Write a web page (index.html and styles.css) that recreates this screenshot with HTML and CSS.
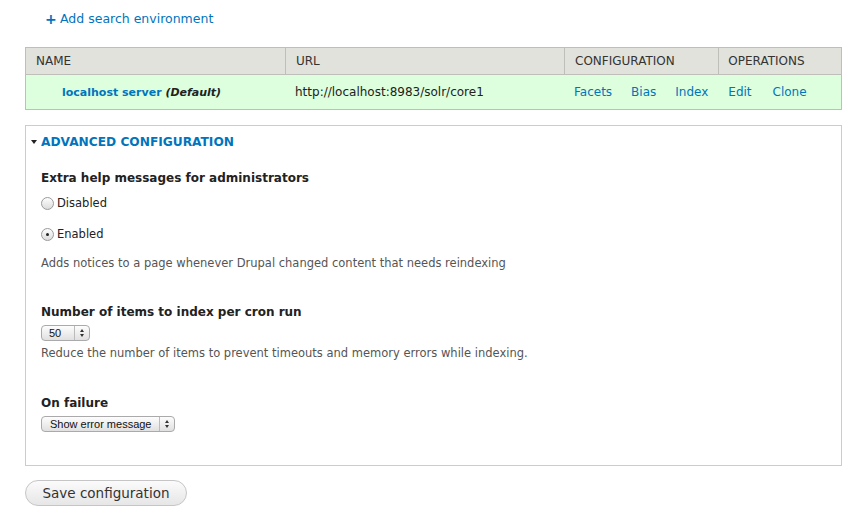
FILE: index.html
```html
<!DOCTYPE html>
<html>
<head>
<meta charset="utf-8">
<link rel="stylesheet" href="styles.css">
</head>
<body>
<div class="page">
  <ul class="action-links">
    <li><a href="#" class="add-link"><span class="plus">+</span>Add search environment</a></li>
  </ul>
  <table class="env-table">
    <thead>
      <tr>
        <th class="c-name">NAME</th>
        <th class="c-url">URL</th>
        <th class="c-conf">CONFIGURATION</th>
        <th class="c-ops">OPERATIONS</th>
      </tr>
    </thead>
    <tbody>
      <tr class="default-row">
        <td class="c-name"><a href="#" class="server">localhost server</a> <em class="default">(Default)</em></td>
        <td class="c-url">http://localhost:8983/solr/core1</td>
        <td class="c-conf"><a href="#" class="op">Facets</a><a href="#" class="op">Bias</a><a href="#" class="op">Index</a></td>
        <td class="c-ops"><a href="#" class="op">Edit</a><a href="#" class="op">Clone</a></td>
      </tr>
    </tbody>
  </table>

  <fieldset class="adv">
    <div class="legend"><span class="tri"></span>ADVANCED CONFIGURATION</div>
    <div class="fieldset-body">
      <div class="form-item">
        <div class="label">Extra help messages for administrators</div>
        <div class="radio-row"><span class="radio"></span>Disabled</div>
        <div class="radio-row"><span class="radio checked"></span>Enabled</div>
        <div class="desc desc-radios">Adds notices to a page whenever Drupal changed content that needs reindexing</div>
      </div>
      <div class="form-item item-cron">
        <div class="label">Number of items to index per cron run</div>
        <div class="select select-small"><span class="sel-val">50</span><span class="sel-arrows"></span></div>
        <div class="desc">Reduce the number of items to prevent timeouts and memory errors while indexing.</div>
      </div>
      <div class="form-item item-fail">
        <div class="label">On failure</div>
        <div class="select select-wide"><span class="sel-val">Show error message</span><span class="sel-arrows"></span></div>
      </div>
    </div>
  </fieldset>

  <div class="actions"><button class="btn">Save configuration</button></div>
</div>
</body>
</html>
```
FILE: styles.css
```css
html, body { margin: 0; padding: 0; background: #fff; }
body { font-family: "DejaVu Sans", "Liberation Sans", sans-serif; color: #333; font-size: 12px; }
a { color: #0074bd; text-decoration: none; }
.page { padding: 0 13px 0 25px; }

.action-links { list-style: none; margin: 0; padding: 11px 0 0 20px; height: 36px; box-sizing: border-box; }
.add-link { font-size: 12.5px; line-height: 16px; display: inline-flex; align-items: center; }
.plus { font-weight: bold; font-size: 14px; margin-right: 6px; width: 9px; display: inline-block; text-align: center; }

.env-table { width: 817px; border-collapse: collapse; margin-top: 11px; }
.env-table th, .env-table td { border: 1px solid #bebfb9; text-align: left; padding: 0 10px; }
.env-table th { background: #e1e2dc; font-weight: normal; font-size: 12px; height: 26px; color: #333; }
.env-table td { background: #ddffdd; height: 34px; font-size: 12px; color: #222; }
.env-table tbody td { border-left-color: #ddffdd; border-right-color: #ddffdd; }
.env-table tbody td:first-child { border-left-color: #bebfb9; }
.env-table tbody td:last-child { border-right-color: #bebfb9; }
.c-name { width: 239px; }
.c-url { width: 258px; }
.c-conf { width: 133px; }
.env-table th.c-ops { padding-left: 9px; }
.env-table td.c-name { padding-left: 36px; width: 213px; }
.env-table td.c-url { padding-left: 9px; }
.env-table td.c-conf { padding-left: 9px; }
.env-table td.c-ops { padding-left: 9px; }
.server { font-weight: bold; font-size: 11px; }
.default { font-weight: bold; font-style: italic; color: #222; font-size: 11px; }
.op { margin-right: 19px; }
.c-ops .op { margin-right: 21px; }
.op:last-child, .c-ops .op:last-child { margin-right: 0; }

.adv { border: 1px solid #ccc; margin: 15px 0 0 0; padding: 0; width: 817px; box-sizing: border-box; height: 341px; }
.legend { font-weight: bold; color: #0074bd; font-size: 12.2px; padding: 8px 0 0 5px; line-height: 16px; display: flex; align-items: center; }
.tri { width: 0; height: 0; border-left: 3px solid transparent; border-right: 3px solid transparent; border-top: 4px solid #222; margin-right: 4px; }
.fieldset-body { padding: 0 15px; }
.form-item { margin-top: 20px; }
.label { font-weight: bold; font-size: 12px; line-height: 16px; color: #222; }
.radio-row { display: flex; align-items: center; font-size: 11.5px; line-height: 16px; color: #222; margin-top: 9px; }
.radio-row + .radio-row { margin-top: 15px; }
.radio { width: 13px; height: 13px; border: 1px solid #9a9a9a; border-radius: 50%; box-sizing: border-box; margin-right: 3px; background: linear-gradient(#fdfdfd, #dcdcdc); position: relative; }
.radio.checked::after { content: ""; position: absolute; left: 4px; top: 4px; width: 3px; height: 3px; border-radius: 50%; background: #222; }
.desc { font-size: 11.5px; color: #555; line-height: 16px; margin-top: 4px; }
.desc-radios { margin-top: 13px; }
.item-cron { margin-top: 33px; }
.item-fail { margin-top: 34px; }
.select { display: inline-flex; align-items: center; height: 16px; border: 1px solid #aaa; border-radius: 4px; box-sizing: border-box; background: linear-gradient(#fdfdfd, #e0e0e0); font-family: "Liberation Sans", sans-serif; font-size: 11px; color: #111; margin-top: 5px; white-space: nowrap; }
.sel-val { padding: 0 8px 0 8px; border-right: 1px solid #bbb; height: 14px; line-height: 14px; }
.sel-arrows { width: 14px; height: 14px; position: relative; }
.sel-arrows::before, .sel-arrows::after { content: ""; position: absolute; left: 5px; width: 0; height: 0; border-left: 2.5px solid transparent; border-right: 2.5px solid transparent; }
.sel-arrows::before { top: 3px; border-bottom: 3px solid #333; }
.sel-arrows::after { top: 8px; border-top: 3px solid #333; }
.select-small { width: 49px; }
.select-small .sel-val { width: 18px; padding: 0 8px 0 7px; }
.select-wide .sel-val { padding: 0 7px 0 8px; }

.actions { margin-top: 14px; }
.btn { font-family: "DejaVu Sans", sans-serif; font-size: 13.5px; color: #333; height: 26px; width: 162px; border: 1px solid #c5c5c5; border-radius: 13px; background: linear-gradient(#fbfbfb, #e6e6e6); padding: 0; }
```
